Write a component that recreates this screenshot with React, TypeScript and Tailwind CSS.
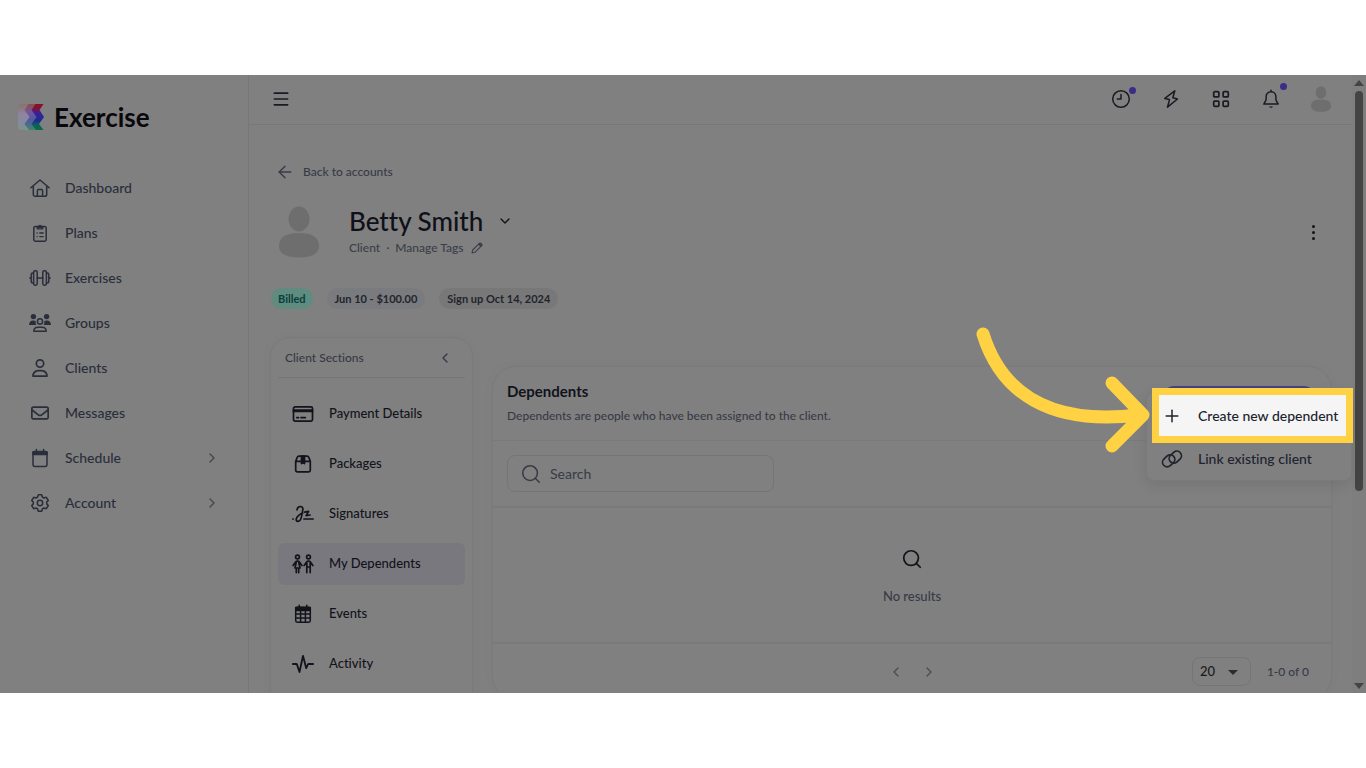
import React, { useState } from "react";
import { ArrowLeft, ChevronDown, ChevronLeft, ChevronRight, Menu, Plus, Search } from "lucide-react";
import { FaRegUser, FaRegEnvelope } from "react-icons/fa6";

type IconProps = { className?: string };

const stroke = {
  fill: "none",
  stroke: "currentColor",
  strokeWidth: 1.5,
  strokeLinecap: "round" as const,
  strokeLinejoin: "round" as const,
};

const HomeIcon = ({ className }: IconProps) => (
  <svg viewBox="0 0 20 20" className={className} {...stroke}>
    <path d="M.8 9.800 10 2l9.200 7.800M3.300 8.200v8.200a1.900 1.900 0 0 0 1.900 1.900h9.600a1.900 1.900 0 0 0 1.900-1.900V8.200M7.400 18v-5.300c0-.6.5-1.100 1.100-1.100h3c.6 0 1.100.5 1.100 1.100V18" />
  </svg>
);

const PlansIcon = ({ className }: IconProps) => (
  <svg viewBox="0 0 20 20" className={className} {...stroke}>
    <rect x="3.800" y="3.400" width="12.400" height="14.800" rx="1.600" />
    <path d="M7 5.600V3.400h1.400a1.700 1.700 0 0 1 3.200 0H13v2.200z" fill="currentColor" strokeWidth="1" />
    <path d="M7 10h.2M7 13.600h.2M9.800 10h3.400M9.800 13.600h3.400" strokeWidth="1.300" />
  </svg>
);

const DumbbellIcon = ({ className }: IconProps) => (
  <svg viewBox="0 0 22 20" className={className} {...stroke}>
    <rect x="4.600" y="2.800" width="3.600" height="14.400" rx="1.400" />
    <rect x="13.800" y="2.800" width="3.600" height="14.400" rx="1.400" />
    <path d="M4.600 5h-.8C2.800 5 2.200 5.800 2.200 6.600v6.800c0 .8.6 1.600 1.600 1.600h.8M17.400 5h.8c1 0 1.600.8 1.600 1.600v6.800c0 .8-.6 1.600-1.600 1.600h-.8M8.200 10h5.600M.8 10h1.400M19.800 10h1.400" />
  </svg>
);

const GroupsIcon = ({ className }: IconProps) => (
  <svg viewBox="0 0 22 20" className={className} {...stroke}>
    <circle cx="4.400" cy="3.600" r="2.700" fill="currentColor" stroke="none" />
    <circle cx="17.600" cy="3.600" r="2.700" fill="currentColor" stroke="none" />
    <path
      d="M0 12c0-2.600 1.600-4.600 4-4.600 1.200 0 2.200.3 2.800.9-.4 1.400-.2 2.600.6 3.700zM22 12c0-2.600-1.600-4.600-4-4.600-1.200 0-2.200.3-2.800.9.4 1.400.2 2.600-.6 3.700z"
      fill="currentColor"
      stroke="none"
    />
    <circle cx="11" cy="8.400" r="2.600" />
    <path d="M4.800 18.200c0-2.600 2-4 4.200-4h4c2.200 0 4.200 1.400 4.200 4z" />
  </svg>
);

const ScheduleIcon = ({ className }: IconProps) => (
  <svg viewBox="0 0 20 20" className={className} {...stroke}>
    <rect x="3" y="3.600" width="14" height="14.800" rx="1.800" />
    <path d="M3 3.800h14v2.800H3zM6.400 1.500v2M13.600 1.500v2" fill="currentColor" />
  </svg>
);

const GearIcon = ({ className }: IconProps) => (
  <svg viewBox="0 0 20 20" className={className} {...stroke}>
    <path d="M8.300 1.700h3.400l.6 2.300 1.700 1 2.300-.7 2 3.200-1.600 1.600v1.800l1.600 1.600-2 3.200-2.300-.7-1.700 1-.6 2.300H8.300L7.700 16 6 15l-2.300.7-2-3.200 1.600-1.600V9.100L1.700 7.500l2-3.200L6 5l1.700-1z" />
    <circle cx="10" cy="10" r="2.700" />
  </svg>
);

const ClockIcon = ({ className }: IconProps) => (
  <svg viewBox="0 0 20 20" className={className} {...stroke}>
    <circle cx="10" cy="10" r="8.300" />
    <path d="M10 5.400V10H6.400" />
  </svg>
);

const BoltIcon = ({ className }: IconProps) => (
  <svg viewBox="0 0 20 20" className={className} {...stroke}>
    <path d="M13.800 1.800 3.800 9.400l4.700 1.200-2 7.600 10-8.200-4.700-1.200z" />
  </svg>
);

const GridIcon = ({ className }: IconProps) => (
  <svg viewBox="0 0 20 20" className={className} {...stroke} strokeWidth={1.7}>
    <rect x="2.700" y="2.700" width="5.200" height="5.200" rx="1" />
    <rect x="12.100" y="2.700" width="5.200" height="5.200" rx="1" />
    <rect x="2.700" y="12.100" width="5.200" height="5.200" rx="1" />
    <rect x="12.100" y="12.100" width="5.200" height="5.200" rx="1" />
  </svg>
);

const BellIcon = ({ className }: IconProps) => (
  <svg viewBox="0 0 20 20" className={className} {...stroke}>
    <path d="M10 1.200v1.400M10 2.800c-3 0-4.900 2.300-4.900 5v2.400c0 1.800-1.700 3-2.200 4.900h14.200c-.5-1.900-2.200-3.100-2.200-4.900V7.800c0-2.700-1.900-5-4.900-5z" />
    <path d="M8.200 17.400h3.600a1.800 1.300 0 0 1-3.600 0z" fill="currentColor" stroke="none" />
  </svg>
);

const Avatar = ({ className }: IconProps) => (
  <svg viewBox="0 0 40 52" className={className} fill="currentColor">
    <ellipse cx="20" cy="13" rx="10.500" ry="12.500" />
    <path d="M0 40c0-9 7-13 20-13s20 4 20 13c0 8-8 11.500-20 11.500S0 48 0 40z" />
  </svg>
);

const PencilIcon = ({ className }: IconProps) => (
  <svg viewBox="0 0 12 12" className={className} {...stroke} strokeWidth={1.1}>
    <path d="M1 11l.7-3L8.400 1.400a1.100 1.100 0 0 1 1.600 0l.6.6a1.100 1.100 0 0 1 0 1.600L4 10.300z" />
    <path d="m7.600 2.200 2.200 2.200.9-.9L8.600 1.300z" fill="currentColor" />
  </svg>
);

const CardIcon = ({ className }: IconProps) => (
  <svg viewBox="0 0 22 20" className={className} {...stroke} strokeWidth={1.7}>
    <rect x="1.500" y="2.800" width="19" height="14.400" rx="1.600" />
    <path d="M1.500 6h19v1.500h-19z" fill="currentColor" />
    <path d="M4.800 13.600h1.800M9 13.600h4.400" />
  </svg>
);

const PackageIcon = ({ className }: IconProps) => (
  <svg viewBox="0 0 22 20" className={className} {...stroke} strokeWidth={1.7}>
    <path d="M3.700 7.400 5.200 3.300c.3-.7.900-1.200 1.700-1.200h8.200c.8 0 1.400.5 1.700 1.200l1.500 4.100v8.800c0 .9-.7 1.600-1.600 1.600H5.300c-.9 0-1.600-.7-1.600-1.600zM3.700 7.400h14.600" />
    <path d="M9.500 2.200h3v7.400L11 8.800l-1.500.8z" fill="currentColor" />
  </svg>
);

const SignatureIcon = ({ className }: IconProps) => (
  <svg viewBox="0 0 22 20" className={className} {...stroke} strokeWidth={1.7}>
    <path d="M5 5.800C5.300 3.700 6.700 2.500 8.400 2.500c1.900 0 2.800 1.400 2.400 3.400L9.500 12.600c-.6 3-1.900 4.700-3.600 4.700-1.500 0-2-1.200-1.500-2.700.8-2.300 3.100-4.200 6.300-5.600M12.600 8.200l4-.8-2.500 4.200 4-.6M12 15h9.200M.9 15h.3" />
  </svg>
);

const DependentsIcon = ({ className }: IconProps) => (
  <svg viewBox="0 0 22 20" className={className} {...stroke} strokeWidth={1.7}>
    <circle cx="5.500" cy="3" r="1.900" />
    <circle cx="16.500" cy="3" r="1.900" />
    <path d="M1.100 11.500 3.800 7.800c.4-.5.8-.7 1.300-.7h.8c.5 0 .9.200 1.300.7l2.700 3.700M4.200 8.500 3 14h5L6.800 8.500M4.300 14.200v4.400M6.700 14.200v4.400" />
    <path d="M12.100 11.500 14.800 7.800c.4-.5.800-.7 1.300-.7h.8c.5 0 .9.200 1.300.7l2.700 3.700M14.800 8.500v10.100M18.200 8.500v10.100M14.800 13h3.400" />
  </svg>
);

const EventsIcon = ({ className }: IconProps) => (
  <svg viewBox="0 0 22 20" className={className} {...stroke}>
    <rect x="3.700" y="3.200" width="14.600" height="15" rx="1.600" />
    <path d="M3.700 3.400h14.600v3H3.700zM7.200 1.200v2M14.800 1.200v2" fill="currentColor" />
    <path d="M3.700 10h14.600M3.700 14h14.600M8.600 6.500v11.500M13.400 6.500v11.500" />
  </svg>
);

const ActivityIcon = ({ className }: IconProps) => (
  <svg viewBox="0 0 22 20" className={className} {...stroke} strokeWidth={1.8}>
    <path d="M.9 10h3.300c.4 0 .7.200.8.600l2.500 7.400L11 1.800l3.200 12.400 1.600-3.600c.2-.4.500-.6.900-.6h4.400" />
  </svg>
);

const LinkIcon = ({ className }: IconProps) => (
  <svg viewBox="0 0 22 18" className={className} {...stroke} strokeWidth={1.7}>
    <rect x="1" y="6.200" width="13.400" height="9.200" rx="4.600" transform="rotate(-42 7.700 10.800)" />
    <rect x="7.600" y="2.600" width="13.400" height="9.200" rx="4.600" transform="rotate(-42 14.300 7.200)" />
  </svg>
);

const Logo = ({ className }: IconProps) => (
  <svg viewBox="0 0 26 26" className={className}>
    <defs>
      <linearGradient id="logo-light" x1="0" y1="0" x2="0" y2="1">
        <stop offset="0" stopColor="#8b7168" />
        <stop offset=".4" stopColor="#8f85a0" />
        <stop offset=".7" stopColor="#8689a0" />
        <stop offset="1" stopColor="#7a9688" />
      </linearGradient>
      <linearGradient id="logo-mid" x1="0" y1="0" x2="0" y2="1">
        <stop offset="0" stopColor="#8a4f48" />
        <stop offset=".3" stopColor="#75569a" />
        <stop offset=".6" stopColor="#5458a0" />
        <stop offset="1" stopColor="#3d8472" />
      </linearGradient>
      <linearGradient id="logo-dark" x1="0" y1="0" x2="0" y2="1">
        <stop offset="0" stopColor="#8a1020" />
        <stop offset=".2" stopColor="#7c143c" />
        <stop offset=".32" stopColor="#3c1f96" />
        <stop offset=".65" stopColor="#1c2c90" />
        <stop offset=".8" stopColor="#0b605c" />
        <stop offset="1" stopColor="#0a6c42" />
      </linearGradient>
    </defs>
    <path d="M4 0h14l-4 6 5 7-5 7 5 6H4a4 4 0 0 1-4-4V4a4 4 0 0 1 4-4z" fill="url(#logo-light)" />
    <path d="M10.500 0H19l-4 6 5 7-5 7 5 6h-9l-4.500-6 5-7-5-7z" fill="url(#logo-mid)" />
    <path d="M17.500 0h8l-4 6 4.500 7-5 7 4.500 6h-7.500l-4.500-6 5-7-5-7z" fill="url(#logo-dark)" />
  </svg>
);

const navItems = [
  { label: "Dashboard", icon: HomeIcon },
  { label: "Plans", icon: PlansIcon },
  { label: "Exercises", icon: DumbbellIcon },
  { label: "Groups", icon: GroupsIcon },
  { label: "Clients", icon: FaRegUser, small: true },
  { label: "Messages", icon: FaRegEnvelope, small: true },
  { label: "Schedule", icon: ScheduleIcon, expandable: true },
  { label: "Account", icon: GearIcon, expandable: true },
];

const sections = [
  { label: "Payment Details", icon: CardIcon },
  { label: "Packages", icon: PackageIcon },
  { label: "Signatures", icon: SignatureIcon },
  { label: "My Dependents", icon: DependentsIcon },
  { label: "Events", icon: EventsIcon },
  { label: "Activity", icon: ActivityIcon },
];

const Sidebar = () => (
  <aside className="w-[249px] shrink-0 border-r border-[#777778]">
    {/* LOGO */}
    <a href="#" className="flex items-center gap-2.5 px-[18px] pt-[26px]">
      <Logo className="h-[26px] w-[26px]" />
      <span className="text-[26px] leading-8 font-bold text-[#08080c]">Exercise</span>
    </a>

    {/* NAV */}
    <nav className="mt-8 flex flex-col">
      {navItems.map(({ label, icon: Icon, small, expandable }) => (
        <a key={label} href="#" className="flex h-[45px] items-center pr-7 pl-7 text-[#2a2e3b]">
          <span className="flex w-6 justify-center">
            <Icon className={small ? "h-[18px] w-[18px]" : "h-5 w-[22px]"} />
          </span>
          <span className="ml-[13px] flex-1 text-sm font-medium">{label}</span>
          {expandable && <ChevronRight className="h-4 w-4 text-[#44464e]" strokeWidth={2} />}
        </a>
      ))}
    </nav>
  </aside>
);

const TopBar = () => (
  <header className="flex h-[50px] shrink-0 items-center justify-between border-b border-[#777778] pr-[21px] pb-px pl-[22px] text-[#1a1b22]">
    <button aria-label="Toggle menu">
      <Menu className="h-5 w-5" strokeWidth={2} />
    </button>
    <div className="flex items-center gap-[30px]">
      <button aria-label="Recent" className="relative">
        <ClockIcon className="h-5 w-5" />
        <span className="absolute -top-0.5 -right-[5px] h-[7px] w-[7px] rounded-full bg-[#3d2c87]" />
      </button>
      <button aria-label="Quick actions">
        <BoltIcon className="h-5 w-5" />
      </button>
      <button aria-label="Apps">
        <GridIcon className="h-5 w-5" />
      </button>
      <button aria-label="Notifications" className="relative">
        <BellIcon className="h-5 w-5" />
        <span className="absolute -top-1.5 -right-[6px] h-[7px] w-[7px] rounded-full bg-[#3d2c87]" />
      </button>
      <button aria-label="Profile">
        <Avatar className="h-[26px] w-5 text-[#6e6e6e]" />
      </button>
    </div>
  </header>
);

const ClientHeader = () => (
  <div className="px-[22px] pt-[37px]">
    <a href="#" className="flex items-center gap-2 pl-1 text-xs leading-5 font-medium text-[#383b46]">
      <ArrowLeft className="h-5 w-5" strokeWidth={1.7} />
      Back to accounts
    </a>

    <div className="mt-[23px] flex items-center">
      <Avatar className="ml-2 h-[52px] w-10 text-[#6e6e6e]" />
      <div className="ml-[30px] flex-1">
        <button className="flex items-center gap-3.5 text-[26px] leading-8 font-medium text-[#0f1018]">
          Betty Smith
          <ChevronDown className="h-4 w-4" strokeWidth={2} />
        </button>
        <div className="flex items-center gap-1.5 text-xs leading-[22px] font-medium text-[#3b3e48]">
          <span>Client</span>
          <span>·</span>
          <a href="#" className="flex items-center gap-2">
            Manage Tags
            <PencilIcon className="h-3 w-3" />
          </a>
        </div>
      </div>
      <button aria-label="More options" className="mr-[11px] flex flex-col gap-[3px] p-1">
        <span className="h-[3px] w-[3px] rounded-full bg-[#12131a]" />
        <span className="h-[3px] w-[3px] rounded-full bg-[#12131a]" />
        <span className="h-[3px] w-[3px] rounded-full bg-[#12131a]" />
      </button>
    </div>

    <div className="mt-[29px] flex gap-3.5 text-[11px] leading-[21px] font-bold">
      <span className="rounded-full bg-[#608b7f] px-[7px] text-[#07403d]">Billed</span>
      <span className="rounded-full bg-[#7a7b7e] px-2 text-[#22242d]">Jun 10 - $100.00</span>
      <span className="rounded-full bg-[#787878] px-2 text-[#22242d]">Sign up Oct 14, 2024</span>
    </div>
  </div>
);

const SectionsCard = () => (
  <div className="w-[203px] shrink-0 rounded-t-[20px] border border-[#7a7a7b] px-[7px] shadow-[0_0_12px_#00000008]">
    <div className="flex h-10 items-center justify-between border-b border-[#757576] pr-3 pl-[7px] text-xs font-medium text-[#363944]">
      Client Sections
      <button aria-label="Collapse sections">
        <ChevronLeft className="h-4 w-4" strokeWidth={2} />
      </button>
    </div>
    <nav className="mt-[15px] flex flex-col gap-2 text-[#12131b]">
      {sections.map(({ label, icon: Icon }) => (
        <a
          key={label}
          href="#"
          className={`flex h-[42px] items-center gap-[15px] rounded-md pl-3.5 text-[13px] font-medium ${
            label === "My Dependents" ? "bg-[#79787f]" : ""
          }`}
        >
          <Icon className="h-5 w-[22px]" />
          {label}
        </a>
      ))}
    </nav>
  </div>
);

const AddDependentMenu = () => (
  <div className="relative">
    <button aria-label="Add dependent" className="h-9 w-[154px] rounded-xl bg-[#46427f]" />

    {/* MENU */}
    <div className="absolute top-[5px] -right-9 w-[206px] rounded-lg border border-[#7a7a7b] bg-[#808080] pb-[5px] text-sm font-medium text-[#20232e] shadow-[0_4px_14px_#00000018]">
      <div className="-mt-1 -mr-0.5 ml-[5px] border-[7px] border-[#ffd243] bg-[#f5f5f5]">
        <button className="flex h-[41px] w-full items-center gap-4 pl-[3px] whitespace-nowrap">
          <Plus className="h-5 w-5" strokeWidth={1.8} />
          Create new dependent
        </button>
      </div>
      <button className="flex h-8 items-center gap-[15px] pl-3.5">
        <LinkIcon className="h-[18px] w-[22px]" />
        Link existing client
      </button>
    </div>

    {/* ARROW */}
    <svg
      viewBox="0 0 176 128"
      className="absolute -top-[60px] right-[166px] h-32 w-44 max-w-none"
      fill="none"
      stroke="#ffd243"
      strokeWidth="13"
      strokeLinecap="round"
      strokeLinejoin="round"
    >
      <path d="M9 8c18 58 66 92 156 81M138 57l31 32-31 31" />
    </svg>
  </div>
);

const DependentsCard = () => {
  const [query, setQuery] = useState("");

  return (
    <div className="mt-[29px] h-[334px] flex-1 rounded-[24px] border border-[#7a7a7b] shadow-[0_0_12px_#00000008]">
      <div className="flex h-[74px] justify-between border-b border-[#7a7a7b] pr-[15px] pl-3.5">
        <div className="pt-3.5">
          <h2 className="text-[15px] leading-5 font-bold text-[#12131b]">Dependents</h2>
          <p className="mt-[5px] text-xs leading-5 font-medium text-[#383b46]">
            Dependents are people who have been assigned to the client.
          </p>
        </div>
        <div className="pt-[19px]">
          <AddDependentMenu />
        </div>
      </div>

      <div className="border-b-2 border-[#7a7a7b] px-3.5 py-3.5">
        <label className="flex h-[37px] w-[267px] items-center gap-2 rounded-lg border border-[#757576] pl-3 text-[#383b46]">
          <Search className="h-[22px] w-[22px]" strokeWidth={1.7} />
          <input
            aria-label="Search"
            placeholder="Search"
            value={query}
            onChange={(e) => setQuery(e.target.value)}
            className="w-48 bg-transparent text-sm outline-none placeholder:text-[#383b46]"
          />
        </label>
      </div>

      <div className="flex h-[136px] flex-col items-center border-b-2 border-[#7a7a7b] pt-10 text-[#383b46]">
        <Search className="h-[22px] w-[22px] text-[#12131b]" strokeWidth={1.9} />
        <p className="mt-4 text-[13px] leading-5 font-medium">No results</p>
      </div>

      <div className="grid grid-cols-[1fr_auto_1fr] items-center px-[22px] pt-[13px]">
        <span />
        <div className="flex gap-[17px] text-[#4b4d55]">
          <button aria-label="Previous page">
            <ChevronLeft className="h-4 w-4" />
          </button>
          <button aria-label="Next page">
            <ChevronRight className="h-4 w-4" />
          </button>
        </div>
        <div className="flex items-center justify-end gap-4 text-xs font-medium text-[#383b46]">
          <div className="relative">
            <select
              aria-label="Rows per page"
              defaultValue="20"
              className="h-[29px] w-[59px] appearance-none rounded-lg border border-[#757576] pl-[7px] text-[13px] text-[#1a1b22]"
            >
              <option>20</option>
              <option>50</option>
            </select>
            <span className="pointer-events-none absolute top-[13px] right-[13px] border-x-[5px] border-t-[5px] border-x-transparent border-t-[#2b2c33]" />
          </div>
          1-0 of 0
        </div>
      </div>
    </div>
  );
};

const Scrollbar = () => (
  <div className="flex w-[14px] shrink-0 flex-col items-center bg-[#7e7e7e] pt-[5px] pb-1">
    <span className="border-x-[5px] border-b-[6px] border-x-transparent border-b-[#444444]" />
    <span className="mt-[5px] h-[400px] w-2 rounded-full bg-[#444444]" />
    <span className="mt-auto border-x-[5px] border-t-[6px] border-x-transparent border-t-[#444444]" />
  </div>
);

const App = () => {
  return (
    <div className="h-screen bg-white py-[75px] font-[Lato,sans-serif] [font-variant-ligatures:none]">
      <div className="flex h-full overflow-hidden bg-[#808080]">
        <Sidebar />
        <main className="flex min-w-0 flex-1 flex-col">
          <TopBar />
          <ClientHeader />
          <div className="mt-7 flex flex-1 items-stretch gap-[19px] pr-5 pl-[21px]">
            <SectionsCard />
            <DependentsCard />
          </div>
        </main>
        <Scrollbar />
      </div>
    </div>
  );
};

export default App;
